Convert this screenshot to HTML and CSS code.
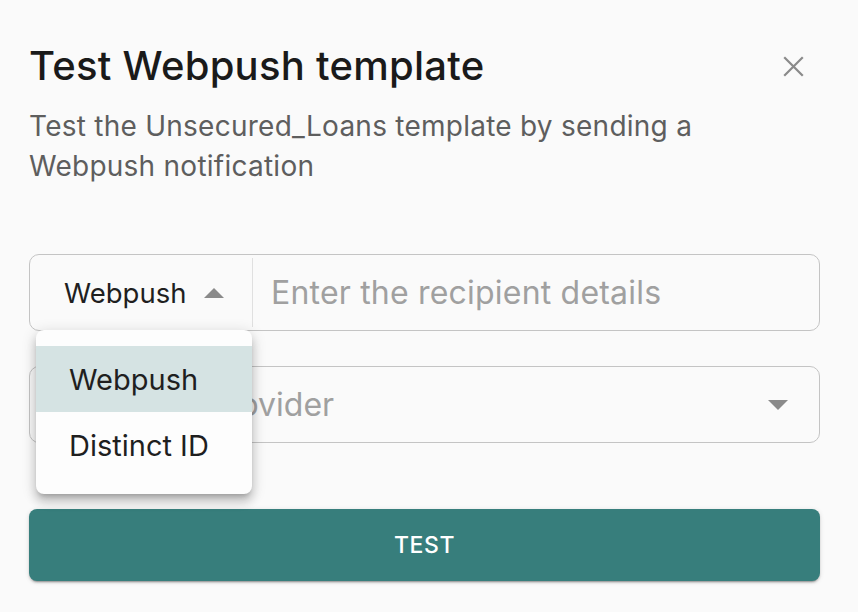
FILE: index.html
```html
<!DOCTYPE html>
<html>
<head>
    <title>Test Webpush template</title>
    <link rel="stylesheet" href="styles.css">
</head>
<body>
    <div class="dialog">
        <div class="dialogHeader">
            <h2 class="dialogTitle">Test Webpush template</h2>
            <button class="closeBtn" aria-label="Close">
                <svg width="21" height="21" viewBox="0 0 21 21">
                    <path d="M2 2 L19 19 M19 2 L2 19" stroke="#8a8a8a" stroke-width="2.2" stroke-linecap="square"/>
                </svg>
            </button>
        </div>
        <p class="dialogText">Test the Unsecured_Loans template by sending a Webpush notification</p>

        <!-- recipient row with the channel picker open -->
        <div class="recipientWrap">
            <div class="inputGroup">
                <div class="channelSelect">
                    <span>Webpush</span>
                    <span class="arrowUp"></span>
                </div>
                <input class="recipientInput" type="text" placeholder="Enter the recipient details">
            </div>
            <ul class="menu">
                <li class="menuItem selected">Webpush</li>
                <li class="menuItem">Distinct ID</li>
            </ul>
        </div>

        <div class="providerSelect">
            <span class="placeholder">Select the provider</span>
            <span class="arrowDown"></span>
        </div>

        <button class="testBtn">TEST</button>
    </div>
</body>
</html>
```

FILE: styles.css
```css
body {
    margin: 0px;
    padding: 0px;
    background-color: #fafafa;
    font-family: 'Inter', 'Roboto', sans-serif;
    color: #1c1c1c;
}

.dialog {
    padding: 42px 38px 30px 29px;
}

.dialogHeader {
    display: flex;
    align-items: center;
    justify-content: space-between;
}

.dialogTitle {
    margin: 0px;
    font-size: 40px;
    font-weight: 500;
    line-height: 48px;
    letter-spacing: 0.25px;
    color: #1a1a1a;
}

.closeBtn {
    border: none;
    background: none;
    padding: 0px;
    margin-right: 16px;
    width: 21px;
    height: 21px;
    cursor: pointer;
}

.closeBtn svg {
    display: block;
}

.dialogText {
    margin: 16px 0px 0px;
    font-size: 28px;
    line-height: 40px;
    letter-spacing: 0.25px;
    color: #5e5e5e;
    max-width: 700px;
}

.recipientWrap {
    position: relative;
    margin-top: 68px;
}

.inputGroup {
    display: flex;
    height: 75px;
    border: 1px solid #c4c4c4;
    border-radius: 10px;
}

.channelSelect {
    display: flex;
    align-items: center;
    gap: 18px;
    width: 188px;
    padding-left: 34px;
    margin: 3px 0px;
    border-right: 1px solid #e0e0e0;
    font-size: 27.5px;
    color: #1f1f1f;
}

.arrowUp {
    width: 0px;
    height: 0px;
    border-left: 10px solid transparent;
    border-right: 10px solid transparent;
    border-bottom: 10px solid #8a8a8a;
}

.recipientInput {
    flex: 1;
    min-width: 0px;
    border: none;
    background: transparent;
    padding: 0px 0px 0px 18px;
    font-family: inherit;
    font-size: 32px;
    letter-spacing: 0.2px;
    color: #1f1f1f;
    outline: none;
}

.recipientInput::placeholder {
    color: #a0a0a0;
}

.menu {
    position: absolute;
    left: 7px;
    top: 76px;
    width: 216px;
    margin: 0px;
    padding: 16px 0px;
    list-style: none;
    background-color: #fdfdfd;
    border-radius: 8px;
    box-shadow: 0px 5px 5px -3px rgba(0, 0, 0, 0.2), 0px 8px 10px 1px rgba(0, 0, 0, 0.14), 0px 3px 14px 2px rgba(0, 0, 0, 0.12);
    z-index: 2;
}

.menuItem {
    height: 66px;
    display: flex;
    align-items: center;
    padding-left: 33px;
    font-size: 29px;
    color: #1f1f1f;
}

.menuItem.selected {
    background-color: #d5e3e3;
}

.providerSelect {
    display: flex;
    align-items: center;
    justify-content: space-between;
    height: 75px;
    margin-top: 35px;
    padding: 0px 31px 0px 18px;
    border: 1px solid #c4c4c4;
    border-radius: 10px;
}

.placeholder {
    font-size: 32px;
    color: #a0a0a0;
}

.arrowDown {
    width: 0px;
    height: 0px;
    border-left: 10px solid transparent;
    border-right: 10px solid transparent;
    border-top: 10px solid #8a8a8a;
}

.testBtn {
    display: block;
    width: 100%;
    height: 72px;
    margin-top: 66px;
    border: none;
    border-radius: 8px;
    background-color: #377e7c;
    color: white;
    font-family: inherit;
    font-size: 23px;
    font-weight: 500;
    letter-spacing: 0.6px;
    box-shadow: 0px 3px 1px -2px rgba(0, 0, 0, 0.2), 0px 2px 2px 0px rgba(0, 0, 0, 0.14), 0px 1px 5px 0px rgba(0, 0, 0, 0.12);
    cursor: pointer;
}
```
